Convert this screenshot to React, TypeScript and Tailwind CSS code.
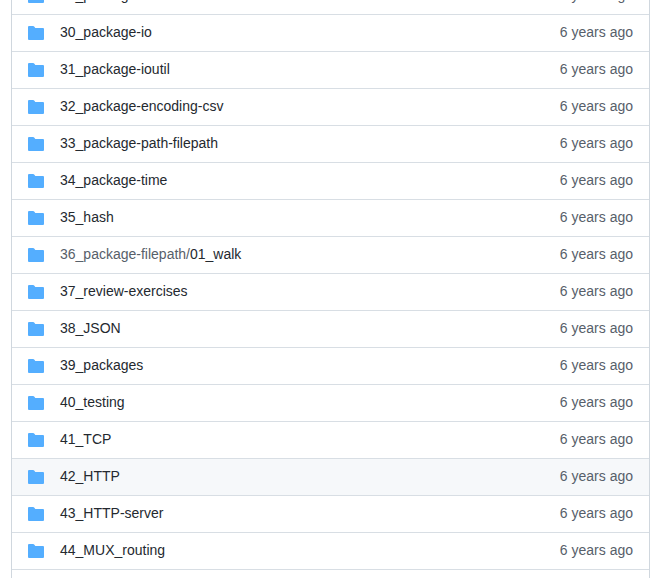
type Entry = { name: string; prefix?: string; active?: boolean };

const entries: Entry[] = [
  { name: '29_package-bufio' },
  { name: '30_package-io' },
  { name: '31_package-ioutil' },
  { name: '32_package-encoding-csv' },
  { name: '33_package-path-filepath' },
  { name: '34_package-time' },
  { name: '35_hash' },
  { prefix: '36_package-filepath/', name: '01_walk' },
  { name: '37_review-exercises' },
  { name: '38_JSON' },
  { name: '39_packages' },
  { name: '40_testing' },
  { name: '41_TCP' },
  { name: '42_HTTP', active: true },
  { name: '43_HTTP-server' },
  { name: '44_MUX_routing' },
  { name: '' },
];

function FolderIcon() {
  return (
    <svg viewBox="0 0 16 16" className="mr-4 size-4 shrink-0 fill-[#54aeff]" aria-hidden="true">
      <path d="M1 1a1 1 0 0 0-1 1v12a1 1 0 0 0 1 1h14a1 1 0 0 0 1-1V4a1 1 0 0 0-1-1H7.5a.25.25 0 0 1-.2-.1l-.9-1.2C6.07 1.26 5.55 1 5 1H1Z" />
    </svg>
  );
}

function Row({ entry }: { entry: Entry }) {
  return (
    <div className={`flex h-[37px] shrink-0 items-center border-t border-[#d8dee4] px-4 ${entry.active ? 'bg-[#f6f8fa]' : 'bg-white'}`}>
      {entry.name && (
        <>
          <FolderIcon />
          <span className="flex-1 pb-0.5 whitespace-nowrap text-[#24292f]">
            {entry.prefix && <span className="text-[#57606a]">{entry.prefix}</span>}
            {entry.name}
          </span>
          <span className="pb-0.5 text-[#57606a]">6 years ago</span>
        </>
      )}
    </div>
  );
}

export default function App() {
  return (
    <div className="h-[578px] overflow-hidden bg-white pr-[9px] pl-[11px] font-['Liberation_Sans',Arial,sans-serif] text-sm leading-5">
      <div className="-mt-[23px] flex flex-col border-x border-[#d0d7de]">
        {entries.map((entry, index) => (
          <Row key={index} entry={entry} />
        ))}
      </div>
    </div>
  );
}
